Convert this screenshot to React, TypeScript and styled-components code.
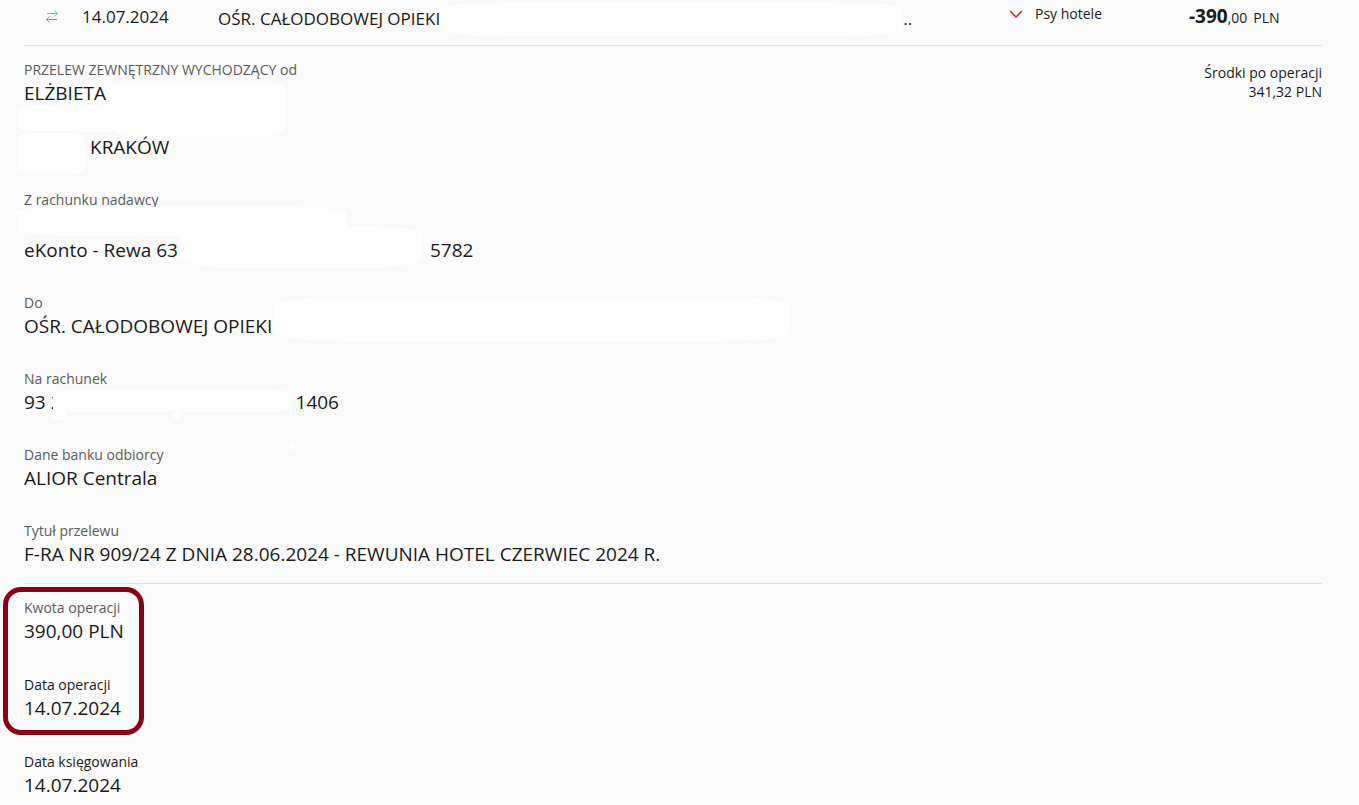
import React from "react";
import styled, { createGlobalStyle } from "styled-components";

const GlobalStyle = createGlobalStyle`
  *, *::before, *::after { box-sizing: border-box; }
  html, body { margin: 0; background: #fafafa; }
  body {
    font-family: "Open Sans", "Noto Sans", sans-serif;
    color: #1a1a1a;
  }
`;

const Page = styled.main`
  padding: 0 37px 4px 24px;
  overflow: hidden;
`;

const Summary = styled.header`
  display: flex;
  align-items: flex-start;
  height: 46px;
  border-bottom: 1px solid #e3e3e3;
`;

const TransferIcon = styled.svg`
  flex: none;
  width: 12px;
  height: 14px;
  margin: 9px 24px 0 22px;
`;

const SummaryDate = styled.time`
  flex: none;
  width: 136px;
  padding-top: 5px;
  font-size: 17px;
  line-height: 24px;
`;

const SummaryTitle = styled.h1`
  position: relative;
  display: flex;
  flex: 1;
  margin: 0;
  padding-top: 7px;
  font-size: 17px;
  font-weight: 400;
  line-height: 24px;
  white-space: nowrap;
`;

const Category = styled.button`
  display: flex;
  flex: none;
  align-items: center;
  gap: 12px;
  width: 180px;
  padding: 4px 0 0;
  border: 0;
  background: none;
  color: inherit;
  font: inherit;
  font-size: 14px;
  line-height: 20px;
`;

const Amount = styled.p`
  flex: none;
  width: 133px;
  margin: 0;
  padding-top: 3px;
  font-size: 14px;
  line-height: 26px;
  white-space: nowrap;

  strong { font-size: 19px; }
  span { margin-left: 6px; }
`;

const Section = styled.section`
  display: flex;
  justify-content: space-between;
  padding: 14px 0 15px;

  & + & { border-top: 1px solid #e3e3e3; }
`;

const Fields = styled.dl`
  margin: 0;
`;

const Field = styled.div`
  position: relative;

  & + & { margin-top: 29px; }
`;

const Label = styled.dt<{ $strong?: boolean }>`
  color: ${(p) => (p.$strong ? "#1a1a1a" : "#5c5c5c")};
  font-size: 14px;
  line-height: ${(p) => (p.$strong ? 21 : 20)}px;
`;

const Value = styled.dd`
  display: flex;
  margin: 0;
  min-height: 27px;
  font-size: 19px;
  line-height: 27px;
  white-space: pre;
`;

const Gap = styled.span<{ $w: number }>`
  flex: none;
  width: ${(p) => p.$w}px;
`;

const Cover = styled.span<{ $x: number; $y: number; $w: number; $h: number; $r: string }>`
  position: absolute;
  left: ${(p) => p.$x}px;
  top: ${(p) => p.$y}px;
  width: ${(p) => p.$w}px;
  height: ${(p) => p.$h}px;
  border-radius: ${(p) => p.$r};
  background: #fff;
`;

const Marked = styled.div`
  position: absolute;
  top: -11px;
  left: -21px;
  width: 141px;
  height: 148px;
  border: 5px solid #880015;
  border-radius: 18px;
  pointer-events: none;
`;

const Balance = styled.p`
  margin: 3px 0 0;
  font-size: 14px;
  line-height: 19px;
  text-align: right;
`;

export default function App() {
  return (
    <>
      <GlobalStyle />
      <Page>
        <Summary>
          <TransferIcon viewBox="0 0 12 14" fill="none" stroke="#4dbb67" aria-hidden="true">
            <path d="M1 4.5H11.5M8.5 1.5L11.5 4.5L8.5 7.5" strokeWidth="0.8" />
            <path d="M11 10.5H0.5M3.5 7.5L0.5 10.5L3.5 13.5" />
          </TransferIcon>
          <SummaryDate dateTime="2024-07-14">14.07.2024</SummaryDate>
          <SummaryTitle>
            <span>OŚR. CAŁODOBOWEJ OPIEKI</span>
            <Gap $w={463} />
            <span>..</span>
            <Cover $x={222} $y={3} $w={463} $h={33} $r="80px / 7px" />
          </SummaryTitle>
          <Category type="button">
            <svg width="14" height="8" viewBox="0 0 14 8" fill="none" stroke="#dc2318" strokeWidth="1.5" aria-hidden="true">
              <path d="M1 1L7 7L13 1" />
            </svg>
            Psy hotele
          </Category>
          <Amount>
            <strong>-390</strong>,00<span>PLN</span>
          </Amount>
        </Summary>

        <Section>
          <Fields>
            <Field>
              <Label>PRZELEW ZEWNĘTRZNY WYCHODZĄCY od</Label>
              <Value>ELŻBIETA</Value>
              <Value />
              <Value>
                <Gap $w={66} />
                <span>KRAKÓW</span>
                <Cover $x={86} $y={21} $w={176} $h={55} $r="26px / 10px" />
                <Cover $x={-7} $y={45} $w={130} $h={26} $r="20px 0 0 20px / 6px" />
                <Cover $x={-6} $y={73} $w={67} $h={41} $r="14px / 8px" />
              </Value>
            </Field>
            <Field>
              <Label>Z rachunku nadawcy</Label>
              <Value />
              <Value>
                <span>eKonto - Rewa 63</span>
                <Gap $w={252} />
                <span>5782</span>
                <Cover $x={-7} $y={17} $w={329} $h={28} $r="60px / 5px" />
                <Cover $x={155} $y={37} $w={244} $h={40} $r="50px / 9px" />
              </Value>
            </Field>
            <Field>
              <Label>Do</Label>
              <Value>
                <span>OŚR. CAŁODOBOWEJ OPIEKI</span>
                <Cover $x={251} $y={4} $w={516} $h={44} $r="80px / 9px" />
              </Value>
            </Field>
            <Field>
              <Label>Na rachunek</Label>
              <Value>
                <span>93 2</span>
                <Gap $w={234} />
                <span>1406</span>
                <Cover $x={29} $y={21} $w={239} $h={21} $r="24px / 4px" />
                <Cover $x={29} $y={31} $w={13} $h={20} $r="4px" />
                <Cover $x={150} $y={43} $w={6} $h={7} $r="2px" />
                <Cover $x={264} $y={73} $w={7} $h={7} $r="2px" />
              </Value>
            </Field>
            <Field>
              <Label>Dane banku odbiorcy</Label>
              <Value>ALIOR Centrala</Value>
            </Field>
            <Field>
              <Label>Tytuł przelewu</Label>
              <Value>F-RA NR 909/24 Z DNIA 28.06.2024 - REWUNIA HOTEL CZERWIEC 2024 R.</Value>
            </Field>
          </Fields>
          <Balance>
            Środki po operacji
            <br />
            341,32 PLN
          </Balance>
        </Section>

        <Section>
          <Fields>
            <Field>
              <Label>Kwota operacji</Label>
              <Value>390,00 PLN</Value>
              <Marked />
            </Field>
            <Field>
              <Label $strong>Data operacji</Label>
              <Value>14.07.2024</Value>
            </Field>
            <Field>
              <Label $strong>Data księgowania</Label>
              <Value>14.07.2024</Value>
            </Field>
          </Fields>
        </Section>
      </Page>
    </>
  );
}
